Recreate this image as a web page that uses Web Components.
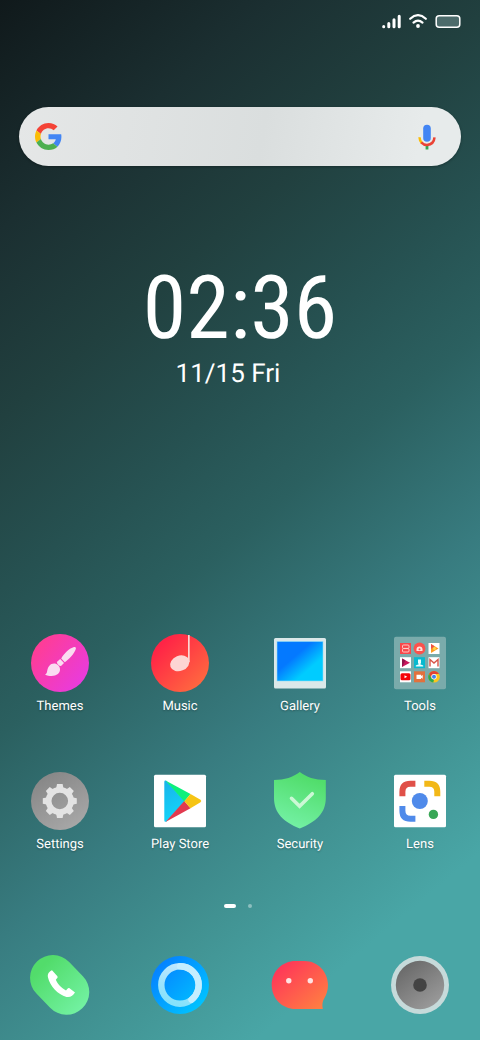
<!DOCTYPE html>
<html lang="en">
<head>
<meta charset="utf-8">
<meta name="viewport" content="width=device-width, initial-scale=1">
<title>Home screen</title>
<style>
  body {
    margin: 0;
    font-family: Roboto, "Liberation Sans", sans-serif;
    text-rendering: geometricPrecision;
    color: #fff;
  }
</style>
</head>
<body>
<home-screen>
  <status-bar slot="status"></status-bar>
  <search-bar></search-bar>
  <clock-widget time="02:36" date="11/15 Fri"></clock-widget>

  <app-grid slot="apps">
    <app-icon label="Themes">
      <svg viewBox="0 0 60 60">
        <defs><linearGradient id="themes" x1="0" y1="0.1" x2="1" y2="0.9"><stop offset="0.1" stop-color="#ff3d94"/><stop offset="1" stop-color="#e63be6"/></linearGradient></defs>
        <circle cx="30" cy="30" r="29" fill="url(#themes)"/>
        <g fill="#fadcf1">
          <path d="M31.200 25.400C34 20.500 39.500 15.200 44 14c1.600-.3 2.200.5 1.800 1.900C44.500 20.500 39 26 34.800 29.300Z"/>
          <path d="M30.200 26 34 29.900 31 33c-1.800.2-4-2-4.200-4Z"/>
          <path d="M15 41.400c3-.8 1.300-5 4.200-8.500 2.600-3 6.500-3 9-.6 2.500 2.500 2.500 6.400-.3 8.800-3.400 2.700-9.300 2.300-12.900.3Z"/>
        </g>
      </svg>
    </app-icon>
    <app-icon label="Music">
      <svg viewBox="0 0 60 60">
        <defs><linearGradient id="music" x1="0.1" y1="0.1" x2="0.9" y2="0.9"><stop offset="0.1" stop-color="#ff2446"/><stop offset="1" stop-color="#ff6b3f"/></linearGradient></defs>
        <circle cx="30" cy="30" r="29" fill="url(#music)"/>
        <ellipse cx="29.800" cy="30.300" rx="10" ry="7.600" transform="rotate(-22 29.800 30.300)" fill="#fdd5d3"/>
        <path d="M38 2h1.700v27H38Z" fill="#fdd5d3"/>
      </svg>
    </app-icon>
    <app-icon label="Gallery">
      <svg viewBox="0 0 60 60">
        <defs><linearGradient id="gallery" x1="0.1" y1="0.1" x2="0.9" y2="0.9"><stop offset="0.35" stop-color="#0479ff"/><stop offset="0.75" stop-color="#00ccff"/></linearGradient></defs>
        <rect x="4" y="5" width="52" height="50.500" rx="1.500" fill="#dbe8e9"/>
        <rect x="7" y="8.500" width="46" height="39.500" fill="url(#gallery)" stroke="#8fdcf5" stroke-width=".6"/>
      </svg>
    </app-icon>
    <app-icon label="Tools">
      <svg viewBox="0 0 60 60">
        <rect x="4" y="3.700" width="52" height="52.500" rx="2" fill="#7aabab"/>
        <rect x="10" y="10" width="11" height="11" fill="#f9474a"/>
        <rect x="12.500" y="12" width="6.500" height="3.400" rx="1" fill="none" stroke="#ffd6d0" stroke-width=".9"/>
        <rect x="12.500" y="15.600" width="6.500" height="3.400" rx="1" fill="none" stroke="#ffd6d0" stroke-width=".9"/>
        <circle cx="29.500" cy="15.500" r="5.900" fill="#fb524c"/>
        <path d="M26.500 16.500a3 3 0 0 1 6 0v1.500h-6Z" fill="#ffe3df"/>
        <circle cx="29.500" cy="16.300" r="1" fill="#fb524c"/>
        <rect x="38.500" y="10" width="11" height="11" fill="#fff"/>
        <path d="M41 11 48.500 15.500 41 20Z" fill="#fb9c22"/>
        <path d="M41 11 44.500 13.200 41 16Z" fill="#ee5148"/>
        <circle cx="44.500" cy="15.500" r="1.500" fill="#ffd54a"/>
        <rect x="10" y="24.200" width="11" height="11" fill="#fff"/>
        <path d="M12 25.500 20 29.700 12 34Z" fill="#c8175d"/>
        <path d="M12 25.500 15.500 27.300 12 34Z" fill="#8d164c"/>
        <rect x="24" y="24.200" width="11" height="11" fill="#08b9cf"/>
        <path d="M28 26.500h3v3.500l-.8 1.200 3 1.300v1h-7.400v-1l3-1.300-.8-1.200Z" fill="#e9ffff"/>
        <rect x="38.500" y="24.200" width="11" height="11" fill="#fff"/>
        <path d="M40 33.500v-7l4 3.500 4-3.500v7" fill="none" stroke="#d85448" stroke-width="1.400"/>
        <rect x="10" y="38.300" width="11" height="11" fill="#fff"/>
        <rect x="10.500" y="40.300" width="10" height="7" rx="1.500" fill="#f40408"/>
        <path d="M14.500 42.300 17.200 43.800 14.500 45.300Z" fill="#fff"/>
        <rect x="24" y="38.300" width="11" height="11" fill="#e2713d"/>
        <path d="M26.500 41.800h4.500v1.200l1.700-1v3.700l-1.700-1v1.200h-4.500Z" fill="#fff"/>
        <circle cx="44" cy="43.800" r="5.800" fill="#fbc51d"/>
        <path d="M39 40.900a5.800 5.800 0 0 1 10 0H44l-2.500 4.300Z" fill="#e34234"/>
        <path d="M39 40.900 41.500 45.300 44 46.700 43.300 49.600A5.800 5.800 0 0 1 39 40.900Z" fill="#2da94f"/>
        <circle cx="44" cy="43.800" r="2.700" fill="#fff"/>
        <circle cx="44" cy="43.800" r="2" fill="#3f82ef"/>
      </svg>
    </app-icon>
    <app-icon label="Settings">
      <svg viewBox="0 0 60 60">
        <defs><linearGradient id="settings" x1="0.2" y1="0" x2="0.8" y2="1"><stop offset="0" stop-color="#858585"/><stop offset="1" stop-color="#a9a9a9"/></linearGradient></defs>
        <circle cx="30" cy="30" r="29" fill="url(#settings)"/>
        <circle cx="29.800" cy="30" r="11.200" fill="none" stroke="#e3e3e3" stroke-width="5.800"/>
        <g fill="#e3e3e3">
          <path id="tooth" d="M25.800 19 27 13h5.600l1.200 6Z"/>
          <use href="#tooth" transform="rotate(45 29.800 30)"/>
          <use href="#tooth" transform="rotate(90 29.800 30)"/>
          <use href="#tooth" transform="rotate(135 29.800 30)"/>
          <use href="#tooth" transform="rotate(180 29.800 30)"/>
          <use href="#tooth" transform="rotate(225 29.800 30)"/>
          <use href="#tooth" transform="rotate(270 29.800 30)"/>
          <use href="#tooth" transform="rotate(315 29.800 30)"/>
        </g>
      </svg>
    </app-icon>
    <app-icon label="Play Store">
      <svg viewBox="0 0 60 60">
        <defs><linearGradient id="play" x1="0.2" y1="0" x2="0.5" y2="1"><stop offset="0" stop-color="#18b5ea"/><stop offset="1" stop-color="#12d6fb"/></linearGradient></defs>
        <rect x="4" y="3.700" width="52" height="52.600" rx="1.500" fill="#fff"/>
        <path d="M14.300 11q0-2 2-1.300L35 30.200 16.300 50.700q-2 .7-2-1.500Z" fill="url(#play)"/>
        <path d="M15.500 9.500 40.500 23 34.300 30.500Z" fill="#0cf07c"/>
        <path d="M15.500 51 40.500 37.200 34.300 30Z" fill="#e23a4f"/>
        <path d="M40.500 23 50.500 28.800q1.500 1.200 0 2.500L40.500 37.200 34.300 30.200Z" fill="#f6c414"/>
      </svg>
    </app-icon>
    <app-icon label="Security">
      <svg viewBox="0 0 60 60">
        <defs><linearGradient id="security" x1="0.7" y1="0.1" x2="0.4" y2="1"><stop offset="0" stop-color="#51dd6b"/><stop offset="1" stop-color="#74f1a5"/></linearGradient></defs>
        <path d="M29.800 1C36 6 45 9 55.800 9v18C55.800 42 46 51 29.800 57.500 13.500 51 4 42 4 27V9C14.500 9 23.500 6 29.800 1Z" fill="url(#security)"/>
        <path d="M21.500 27.300 29.600 35.200 42.300 22.700" fill="none" stroke="#cbf8d5" stroke-width="3.600" stroke-linecap="round"/>
      </svg>
    </app-icon>
    <app-icon label="Lens">
      <svg viewBox="0 0 60 60">
        <rect x="4" y="3.700" width="52" height="52.600" rx="1.500" fill="#fff"/>
        <g fill="none" stroke-width="6">
          <path d="M12.400 25.300v-4.500q0-8 8-8h5" stroke="#e05048"/>
          <path d="M34.300 12.800h5q8 0 8 8v4.500" stroke="#f2b818"/>
          <path d="M12.400 35v4.700q0 8 8 8h5" stroke="#4f8aea"/>
        </g>
        <circle cx="29.800" cy="30" r="8" fill="#4f8aea"/>
        <circle cx="43.400" cy="43.400" r="4.700" fill="#3aa757"/>
      </svg>
    </app-icon>
  </app-grid>

  <page-dots slot="dots"></page-dots>

  <app-grid slot="dock">
    <app-icon name="Phone">
      <svg viewBox="0 0 60 60">
        <defs><linearGradient id="phone" x1="0" y1="0" x2="60" y2="60" gradientUnits="userSpaceOnUse"><stop offset="0.2" stop-color="#52dc6b"/><stop offset="1" stop-color="#78f5ab"/></linearGradient></defs>
        <path d="M22.800 22.800 36.500 37" stroke="url(#phone)" stroke-width="45.500" stroke-linecap="round"/>
        <path d="M22 15.300c-3 1.300-4.800 3.600-4 7.300 2 8.500 9.500 17 18.500 19.300 3.700.8 6.700-1.400 8.500-4.400L39.200 33c-1.200-.5-1.700 1-3.200 2.400-4-1.800-8.500-6.500-10.200-10.600 1.100-1.500 2.400-2.200 1.600-3.600Z" fill="#fff"/>
      </svg>
    </app-icon>
    <app-icon name="Browser">
      <svg viewBox="0 0 60 60">
        <defs>
          <linearGradient id="browser" x1="0.1" y1="0.1" x2="0.9" y2="0.9"><stop offset="0" stop-color="#067eff"/><stop offset="1" stop-color="#00c6ff"/></linearGradient>
          <linearGradient id="ring" x1="0.7" y1="0" x2="0.4" y2="1"><stop offset="0" stop-color="#c0e7ff"/><stop offset="1" stop-color="#86e2fb"/></linearGradient>
        </defs>
        <circle cx="30" cy="30" r="29" fill="url(#browser)"/>
        <circle cx="30" cy="30" r="18.700" fill="none" stroke="url(#ring)" stroke-width="6.400"/>
        <path d="M30 11.300A18.700 18.700 0 0 1 41.500 44.700" fill="none" stroke="#c4eeff" stroke-width="6.400" stroke-linecap="round"/>
      </svg>
    </app-icon>
    <app-icon name="Messages">
      <svg viewBox="0 0 60 60">
        <defs><linearGradient id="messages" x1="0.1" y1="0.1" x2="0.9" y2="0.9"><stop offset="0" stop-color="#ff3459"/><stop offset="1" stop-color="#ff7c43"/></linearGradient></defs>
        <path d="M25.500 6h9C48 6 58 17 58 30c0 5.500-1.500 9.500-3.800 13.500C52.300 46.500 52 50 52.800 54H25.500C12 54 1.700 43.300 1.700 30S12 6 25.500 6Z" fill="url(#messages)"/>
        <circle cx="18.800" cy="25.700" r="2.700" fill="#ffe3e3"/>
        <circle cx="40.300" cy="25.700" r="2.700" fill="#ffe3e3"/>
      </svg>
    </app-icon>
    <app-icon name="Camera">
      <svg viewBox="0 0 60 60">
        <defs><linearGradient id="camera" x1="0.2" y1="0.1" x2="0.8" y2="0.9"><stop offset="0" stop-color="#6b6b6b"/><stop offset="1" stop-color="#999"/></linearGradient></defs>
        <circle cx="30" cy="30" r="29" fill="#c6dada"/>
        <circle cx="30" cy="30" r="24.200" fill="url(#camera)"/>
        <circle cx="30" cy="30" r="6.800" fill="#434343"/>
      </svg>
    </app-icon>
  </app-grid>
</home-screen>

<script>
class HomeScreen extends HTMLElement {
  constructor() {
    super();
    this.attachShadow({ mode: "open" });
    this.shadowRoot.innerHTML = `
      <style>
        :host {
          display: flex;
          flex-direction: column;
          box-sizing: border-box;
          min-height: 100vh;
          padding-bottom: 25px;
          background: linear-gradient(140deg,
            #10191b 0%, #1b2f31 16%, #21403f 29%, #265151 41%,
            #2b6060 51%, #387c80 65%, #419292 76%, #49a6a6 87%);
        }
        main {
          flex: 1;
          display: flex;
          flex-direction: column;
          padding: 64px 19px 0;
        }
        nav {
          display: flex;
          flex-direction: column;
        }
        ::slotted(page-dots) {
          margin: 50px 0 47px;
        }
      </style>
      <slot name="status"></slot>
      <main><slot></slot></main>
      <nav>
        <slot name="apps"></slot>
        <slot name="dots"></slot>
        <slot name="dock"></slot>
      </nav>
    `;
  }
}

class StatusBar extends HTMLElement {
  constructor() {
    super();
    this.attachShadow({ mode: "open" });
    this.shadowRoot.innerHTML = `
      <style>
        :host {
          display: flex;
          justify-content: flex-end;
          gap: 8px;
          padding: 14px 19px;
        }
        svg {
          display: block;
          height: 15px;
        }
      </style>
      <svg width="19" viewBox="0 0 19 15" stroke="#fff" stroke-width="3" stroke-linecap="round">
        <path d="M1.700 12.600v.2M6.800 9.500v3.200M12 5.800v6.900M17.200 2.300v10.400"/>
      </svg>
      <svg width="18" viewBox="0 0 18 15" fill="none" stroke="#fff" stroke-width="2.200" stroke-linecap="round">
        <path d="M1.200 4.800Q9-2.500 16.800 4.800M4.500 8.600q4.500-4 9 0"/>
        <circle cx="9" cy="12" r="1.900" fill="#fff" stroke="none"/>
      </svg>
      <svg width="26" viewBox="0 0 26 15">
        <rect x="1.200" y="1.700" width="23.600" height="11.600" rx="3" fill="#4c6b6b" stroke="#fff" stroke-width="1.500"/>
      </svg>
    `;
  }
}

class SearchBar extends HTMLElement {
  constructor() {
    super();
    this.attachShadow({ mode: "open" });
    this.shadowRoot.innerHTML = `
      <style>
        :host {
          display: block;
        }
        form {
          display: flex;
          align-items: center;
          height: 59px;
          padding: 0 14px 0 16px;
          border-radius: 30px;
          background: linear-gradient(100deg, #e5e7e7, #dadede 55%, #e7ebeb 90%);
          box-shadow: 0 1px 3px rgba(0, 0, 0, 0.3);
        }
        input {
          flex: 1;
          min-width: 0;
          height: 40px;
          margin: 0 12px;
          padding: 0;
          border: 0;
          outline: 0;
          background: none;
          font: 16px Roboto, sans-serif;
          color: #333;
        }
        button {
          display: flex;
          justify-content: center;
          width: 40px;
          padding: 0;
          border: 0;
          background: none;
        }
      </style>
      <form>
        <svg width="27" height="27" viewBox="0 0 48 48">
          <path fill="#f44336" d="M24 9.500c3.540 0 6.710 1.220 9.210 3.600l6.850-6.850C35.900 2.380 30.470 0 24 0 14.620 0 6.510 5.380 2.560 13.220l7.980 6.190C12.430 13.720 17.740 9.500 24 9.500z"/>
          <path fill="#4285f4" d="M46.980 24.550c0-1.570-.15-3.090-.38-4.550H24v9.020h12.940c-.58 2.960-2.260 5.480-4.780 7.180l7.730 6c4.510-4.180 7.090-10.360 7.090-17.650z"/>
          <path fill="#fbbc05" d="M10.530 28.590c-.48-1.450-.76-2.990-.76-4.590s.27-3.140.76-4.590l-7.980-6.190C.92 16.460 0 20.120 0 24c0 3.880.92 7.540 2.560 10.780l7.970-6.190z"/>
          <path fill="#4caf50" d="M24 48c6.480 0 11.930-2.130 15.890-5.810l-7.730-6c-2.150 1.450-4.920 2.300-8.160 2.300-6.260 0-11.570-4.220-13.470-9.910l-7.980 6.190C6.510 42.620 14.620 48 24 48z"/>
        </svg>
        <input type="text" aria-label="Search">
        <button type="button" aria-label="Voice search">
          <svg width="18" height="26" viewBox="0 0 18 26">
            <rect x="5.200" y=".7" width="7.600" height="17" rx="3.800" fill="#4285f4"/>
            <path d="M9 20v5.500" stroke="#34a853" stroke-width="2.800"/>
            <path d="M1.500 13.300q.2 3.800 2.500 6" fill="none" stroke="#fbbc05" stroke-width="2.500"/>
            <path d="M3.300 18.300Q5.600 20.900 9 20.900 16 20.300 16.500 13.300" fill="none" stroke="#ea4335" stroke-width="2.500"/>
          </svg>
        </button>
      </form>
    `;
  }
}

class ClockWidget extends HTMLElement {
  constructor() {
    super();
    this.attachShadow({ mode: "open" });
    this.shadowRoot.innerHTML = `
      <style>
        :host {
          display: flex;
          flex-direction: column;
          align-items: center;
          gap: 3px;
          margin-top: 97px;
        }
        .time {
          font: 88px/92px "Roboto Condensed", "Liberation Sans Narrow", Roboto, sans-serif;
        }
        .date {
          padding-right: 24px;
          font-size: 26px;
          line-height: 32px;
        }
      </style>
      <time class="time"></time>
      <time class="date"></time>
    `;
  }

  connectedCallback() {
    this.shadowRoot.querySelector(".time").textContent = this.getAttribute("time");
    this.shadowRoot.querySelector(".date").textContent = this.getAttribute("date");
  }
}

class AppGrid extends HTMLElement {
  constructor() {
    super();
    this.attachShadow({ mode: "open" });
    this.shadowRoot.innerHTML = `
      <style>
        :host {
          display: grid;
          grid-template-columns: repeat(4, 1fr);
          row-gap: 55px;
        }
      </style>
      <slot></slot>
    `;
  }
}

class AppIcon extends HTMLElement {
  constructor() {
    super();
    this.attachShadow({ mode: "open" });
    this.shadowRoot.innerHTML = `
      <style>
        :host {
          display: flex;
          justify-content: center;
        }
        button {
          display: flex;
          flex-direction: column;
          align-items: center;
          gap: 5px;
          padding: 0;
          border: 0;
          background: none;
          color: inherit;
          font: 13px/18px Roboto, "Liberation Sans", sans-serif;
          text-rendering: inherit;
          text-shadow: 0 1px 2px rgba(0, 0, 0, 0.3);
          cursor: pointer;
        }
        ::slotted(svg) {
          display: block;
          width: 60px;
          height: 60px;
        }
      </style>
      <button type="button"><slot></slot></button>
    `;
  }

  connectedCallback() {
    const button = this.shadowRoot.querySelector("button");
    // dock icons only have a name, no visible label
    if (this.hasAttribute("label")) {
      const label = document.createElement("span");
      label.textContent = this.getAttribute("label");
      button.appendChild(label);
    } else {
      button.setAttribute("aria-label", this.getAttribute("name"));
    }
  }
}

class PageDots extends HTMLElement {
  constructor() {
    super();
    this.attachShadow({ mode: "open" });
    this.shadowRoot.innerHTML = `
      <style>
        :host {
          display: flex;
          justify-content: center;
          gap: 12px;
          padding-right: 4px;
        }
        span {
          width: 4px;
          height: 4px;
          border-radius: 2px;
          background: rgba(255, 255, 255, 0.4);
        }
        .active {
          width: 12px;
          background: #fff;
        }
      </style>
      <span class="active"></span>
      <span></span>
    `;
  }
}

customElements.define("home-screen", HomeScreen);
customElements.define("status-bar", StatusBar);
customElements.define("search-bar", SearchBar);
customElements.define("clock-widget", ClockWidget);
customElements.define("app-grid", AppGrid);
customElements.define("app-icon", AppIcon);
customElements.define("page-dots", PageDots);
</script>
</body>
</html>
